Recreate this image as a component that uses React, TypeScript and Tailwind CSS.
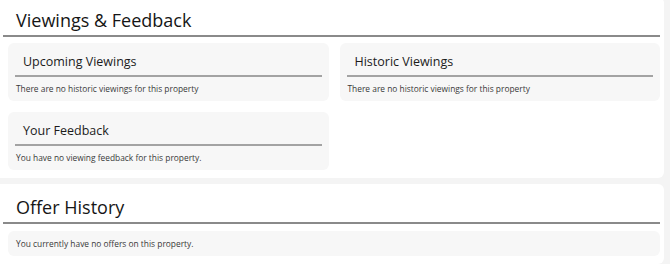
const FONT = "font-['Open_Sans',sans-serif]";

function SubCard({ title, text }: { title: string; text: string }) {
  return (
    <div className="rounded-md bg-[#f7f7f7] px-[7px] pb-[7px]">
      <div className="border-b-2 border-[#a3a3a3] pl-[8px] pt-[11px] pb-[5px]">
        <h3 className="text-[12.5px] leading-[16px] text-[#1c1c1c]">{title}</h3>
      </div>
      <p className="pl-[1px] pt-[7px] text-[8.4px] leading-[10px] text-[#3a3a3a]">{text}</p>
    </div>
  );
}

function Section({
  title,
  className,
  children,
}: {
  title: string;
  className?: string;
  children: React.ReactNode;
}) {
  return (
    <section className={`rounded-r-md bg-white pl-[3px] pr-[4px] pb-[8px] ${className ?? ""}`}>
      <div className="border-b-2 border-[#8a8a8a] pl-[13px] pt-[9px] pb-[1px]">
        <h2 className="text-[18px] leading-[28px] text-[#161616]">{title}</h2>
      </div>
      <div className="pl-[5px] pt-[6px]">{children}</div>
    </section>
  );
}

export default function App() {
  return (
    <div className={`h-[264px] w-[670px] overflow-hidden bg-[#f4f4f4] pr-[6px] ${FONT}`}>
      <div className="flex flex-col gap-[6px]">
        <Section title="Viewings & Feedback" className="-mt-[3px]">
          <div className="grid grid-cols-2 gap-x-[11px] gap-y-[11px]">
            <SubCard
              title="Upcoming Viewings"
              text="There are no historic viewings for this property"
            />
            <SubCard
              title="Historic Viewings"
              text="There are no historic viewings for this property"
            />
            <SubCard
              title="Your Feedback"
              text="You have no viewing feedback for this property."
            />
          </div>
        </Section>
        <Section title="Offer History">
          <div className="mt-[1px] flex h-[25px] items-center rounded-md bg-[#f7f7f7] px-[8px]">
            <p className="text-[8.4px] leading-[10px] text-[#3a3a3a]">
              You currently have no offers on this property.
            </p>
          </div>
        </Section>
      </div>
    </div>
  );
}
